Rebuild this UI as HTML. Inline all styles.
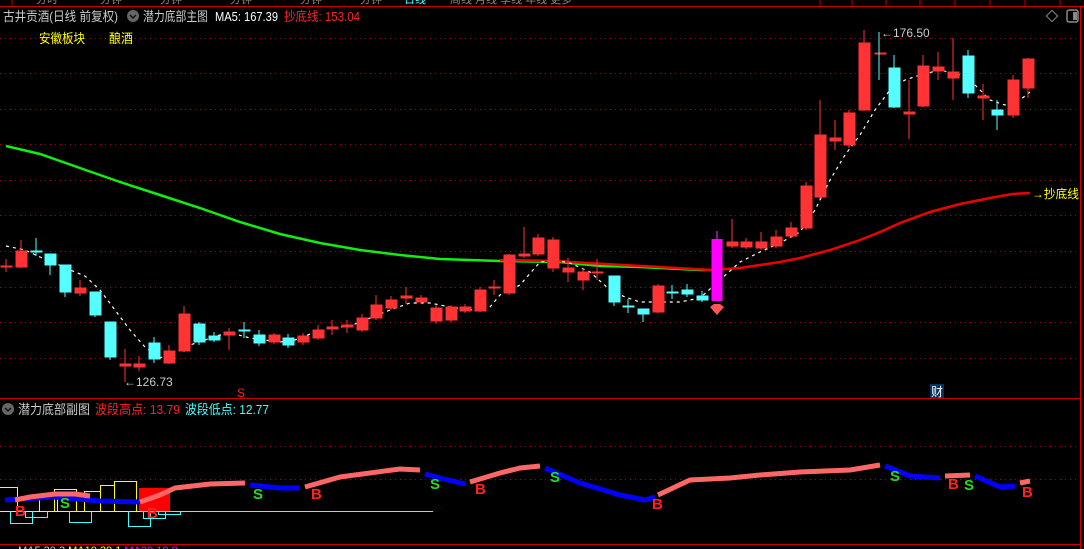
<!DOCTYPE html>
<html><head><meta charset="utf-8"><style>
html,body{margin:0;padding:0;background:#000;width:1084px;height:549px;overflow:hidden}
svg{display:block}
text{font-family:"Liberation Sans","Noto Sans CJK SC",sans-serif}
</style></head><body>
<svg width="1084" height="549" viewBox="0 0 1084 549" xmlns="http://www.w3.org/2000/svg">
<rect width="1084" height="549" fill="#000"/>
<g fill="#888" font-size="11">
<text x="36" y="3">分时</text><text x="100" y="3">分钟</text><text x="160" y="3">分钟</text><text x="230" y="3">分钟</text><text x="300" y="3">分钟</text><text x="360" y="3">分钟</text>
<text x="404" y="3" fill="#4ff">日线</text><text x="450" y="3">周线 月线 季线 年线 更多</text>
</g>
<g stroke="#c00" stroke-width="1">
<line x1="0" y1="6.5" x2="1084" y2="6.5"/>
<line x1="1080.5" y1="6" x2="1080.5" y2="549"/>
<line x1="12" y1="0" x2="12" y2="6"/>
<line x1="820" y1="0" x2="820" y2="6"/><line x1="852" y1="0" x2="852" y2="6"/><line x1="886" y1="0" x2="886" y2="6"/><line x1="920" y1="0" x2="920" y2="6"/><line x1="955" y1="0" x2="955" y2="6"/><line x1="990" y1="0" x2="990" y2="6"/><line x1="1025" y1="0" x2="1025" y2="6"/><line x1="1060" y1="0" x2="1060" y2="6"/>
<line x1="0" y1="398.5" x2="1080" y2="398.5"/>
<line x1="0" y1="544.5" x2="1080" y2="544.5"/>
</g>
<g stroke="#a00" stroke-width="1" stroke-dasharray="1,4">
<line x1="0" y1="38.5" x2="1080" y2="38.5"/><line x1="0" y1="73.5" x2="1080" y2="73.5"/><line x1="0" y1="109.5" x2="1080" y2="109.5"/><line x1="0" y1="144.5" x2="1080" y2="144.5"/><line x1="0" y1="180.5" x2="1080" y2="180.5"/><line x1="0" y1="215.5" x2="1080" y2="215.5"/><line x1="0" y1="251.5" x2="1080" y2="251.5"/><line x1="0" y1="287.5" x2="1080" y2="287.5"/><line x1="0" y1="322.5" x2="1080" y2="322.5"/><line x1="0" y1="358.5" x2="1080" y2="358.5"/>
<line x1="0" y1="446.5" x2="1080" y2="446.5"/><line x1="0" y1="479.5" x2="1080" y2="479.5"/>
</g>
<text x="3" y="21" font-size="13" fill="#ccc" textLength="115" lengthAdjust="spacingAndGlyphs">古井贡酒(日线 前复权)</text>
<circle cx="133" cy="16" r="6" fill="#666"/><path d="M130 15l3 3 3-3" stroke="#111" stroke-width="1.5" fill="none"/>
<text x="143" y="21" font-size="13" fill="#ccc" textLength="65" lengthAdjust="spacingAndGlyphs">潜力底部主图</text>
<text x="215" y="21" font-size="13" fill="#fff" textLength="63" lengthAdjust="spacingAndGlyphs">MA5: 167.39</text>
<text x="284" y="21" font-size="13" fill="#f22" textLength="76" lengthAdjust="spacingAndGlyphs">抄底线: 153.04</text>
<text x="39" y="43" font-size="13" fill="#ff0" textLength="46" lengthAdjust="spacingAndGlyphs">安徽板块</text>
<text x="109" y="43" font-size="13" fill="#ff0" textLength="24" lengthAdjust="spacingAndGlyphs">酿酒</text>
<rect x="1048" y="12" width="8" height="8" transform="rotate(45 1052 16)" fill="none" stroke="#888"/>
<rect x="1067" y="10" width="11" height="12" rx="2" fill="none" stroke="#888" stroke-width="1.5"/><rect x="1073" y="12" width="4" height="8" fill="#888"/>
<polyline fill="none" stroke="#1e1" stroke-width="2.5" points="6,146 40,154 80,168 120,182 160,195 200,208 240,222 280,234 320,243 360,250 400,255 440,259 500,261 560,262 600,266 640,267 700,270 712,270"/>
<polyline fill="none" stroke="#e00" stroke-width="2.5" points="500,260 560,261 570,262 712,270 740,268 780,262 800,258 830,250 860,240 880,232 900,223 930,212 960,204 990,198 1012,194 1030,193"/>
<text x="1032" y="198" font-size="12" fill="#ff0" textLength="47" lengthAdjust="spacingAndGlyphs">→抄底线</text>
<polyline fill="none" stroke="#fff" stroke-width="1.2" stroke-dasharray="3,4" points="6,246 25,250 40,257 55,263 70,270 85,276 100,290 115,310 130,330 145,347 160,358 175,352 190,345 205,340 220,335 235,334 250,338 265,340 280,342 295,340 310,334 330,328 350,326 370,318 390,310 410,303 430,303 450,307 470,310 490,307 500,295 520,285 540,262 555,260 570,263 590,272 610,290 625,297 640,302 660,302 680,302 700,298 720,280 740,262 760,252 780,243 800,232 815,210 830,180 845,155 860,135 875,110 890,90 905,80 920,75 940,70 960,75 975,85 990,100 1005,105 1020,100 1030,92"/>
<g stroke="#f33" fill="#f33" stroke-width="1">
<line x1="6" y1="259" x2="6" y2="272"/><rect x="1" y="266" width="11" height="1"/>
<line x1="21" y1="240" x2="21" y2="268"/><rect x="16" y="251" width="11" height="16"/>
<line x1="80" y1="280" x2="80" y2="296"/><rect x="75" y="288" width="11" height="5"/>
<line x1="125" y1="349" x2="125" y2="382"/><rect x="120" y="364" width="11" height="2"/>
<line x1="139" y1="356" x2="139" y2="371"/><rect x="134" y="364" width="11" height="3"/>
<line x1="169" y1="345" x2="169" y2="364"/><rect x="164" y="351" width="11" height="12"/>
<line x1="184" y1="306" x2="184" y2="352"/><rect x="179" y="314" width="11" height="37"/>
<line x1="229" y1="328" x2="229" y2="350"/><rect x="224" y="332" width="11" height="3"/>
<line x1="274" y1="333" x2="274" y2="344"/><rect x="269" y="335" width="11" height="7"/>
<line x1="303" y1="333" x2="303" y2="345"/><rect x="298" y="336" width="11" height="6"/>
<line x1="318" y1="325" x2="318" y2="340"/><rect x="313" y="330" width="11" height="8"/>
<line x1="332" y1="320" x2="332" y2="335"/><rect x="327" y="327" width="11" height="2"/>
<line x1="347" y1="320" x2="347" y2="333"/><rect x="342" y="325" width="11" height="2"/>
<line x1="362" y1="314" x2="362" y2="332"/><rect x="357" y="318" width="11" height="12"/>
<line x1="376" y1="295" x2="376" y2="320"/><rect x="371" y="305" width="11" height="13"/>
<line x1="391" y1="296" x2="391" y2="310"/><rect x="386" y="300" width="11" height="8"/>
<line x1="406" y1="287" x2="406" y2="304"/><rect x="401" y="296" width="11" height="2"/>
<line x1="421" y1="295" x2="421" y2="304"/><rect x="416" y="298" width="11" height="4"/>
<line x1="436" y1="305" x2="436" y2="324"/><rect x="431" y="308" width="11" height="13"/>
<line x1="451" y1="305" x2="451" y2="322"/><rect x="446" y="307" width="11" height="13"/>
<line x1="465" y1="304" x2="465" y2="313"/><rect x="460" y="307" width="11" height="4"/>
<line x1="480" y1="287" x2="480" y2="312"/><rect x="475" y="290" width="11" height="21"/>
<line x1="494" y1="280" x2="494" y2="295"/><rect x="489" y="287" width="11" height="1"/>
<line x1="509" y1="254" x2="509" y2="295"/><rect x="504" y="255" width="11" height="38"/>
<line x1="524" y1="227" x2="524" y2="258"/><rect x="519" y="254" width="11" height="2"/>
<line x1="538" y1="234" x2="538" y2="256"/><rect x="533" y="238" width="11" height="16"/>
<line x1="553" y1="237" x2="553" y2="272"/><rect x="548" y="240" width="11" height="28"/>
<line x1="568" y1="258" x2="568" y2="282"/><rect x="563" y="268" width="11" height="4"/>
<line x1="583" y1="268" x2="583" y2="290"/><rect x="578" y="272" width="11" height="8"/>
<line x1="597" y1="259" x2="597" y2="280"/><rect x="592" y="272" width="11" height="1"/>
<line x1="658" y1="284" x2="658" y2="313"/><rect x="653" y="286" width="11" height="26"/>
<line x1="732" y1="219" x2="732" y2="248"/><rect x="727" y="242" width="11" height="4"/>
<line x1="746" y1="238" x2="746" y2="249"/><rect x="741" y="242" width="11" height="5"/>
<line x1="761" y1="232" x2="761" y2="250"/><rect x="756" y="242" width="11" height="6"/>
<line x1="776" y1="230" x2="776" y2="248"/><rect x="771" y="237" width="11" height="9"/>
<line x1="791" y1="222" x2="791" y2="238"/><rect x="786" y="228" width="11" height="8"/>
<line x1="806" y1="182" x2="806" y2="230"/><rect x="801" y="186" width="11" height="42"/>
<line x1="820" y1="100" x2="820" y2="199"/><rect x="815" y="135" width="11" height="62"/>
<line x1="835" y1="120" x2="835" y2="150"/><rect x="830" y="138" width="11" height="3"/>
<line x1="849" y1="110" x2="849" y2="148"/><rect x="844" y="113" width="11" height="32"/>
<line x1="864" y1="30" x2="864" y2="111"/><rect x="859" y="43" width="11" height="67"/>
<rect x="875" y="53" width="11" height="1"/>
<line x1="909" y1="80" x2="909" y2="139"/><rect x="904" y="112" width="11" height="2"/>
<line x1="923" y1="55" x2="923" y2="107"/><rect x="918" y="66" width="11" height="40"/>
<line x1="938" y1="52" x2="938" y2="80"/><rect x="933" y="67" width="11" height="4"/>
<line x1="953" y1="38" x2="953" y2="100"/><rect x="948" y="72" width="11" height="6"/>
<line x1="983" y1="84" x2="983" y2="120"/><rect x="978" y="96" width="11" height="2"/>
<line x1="1013" y1="75" x2="1013" y2="118"/><rect x="1008" y="80" width="11" height="35"/>
<line x1="1028" y1="58" x2="1028" y2="98"/><rect x="1023" y="59" width="11" height="29"/>
</g>
<g stroke="#5ff" fill="#5ff" stroke-width="1">
<line x1="36" y1="238" x2="36" y2="256"/><rect x="31" y="251" width="11" height="1"/>
<line x1="50" y1="254" x2="50" y2="275"/><rect x="45" y="254" width="11" height="11"/>
<line x1="65" y1="265" x2="65" y2="297"/><rect x="60" y="265" width="11" height="27"/>
<line x1="95" y1="292" x2="95" y2="317"/><rect x="90" y="292" width="11" height="23"/>
<line x1="110" y1="322" x2="110" y2="360"/><rect x="105" y="322" width="11" height="35"/>
<line x1="154" y1="337" x2="154" y2="363"/><rect x="149" y="343" width="11" height="16"/>
<line x1="199" y1="322" x2="199" y2="345"/><rect x="194" y="324" width="11" height="18"/>
<line x1="214" y1="332" x2="214" y2="342"/><rect x="209" y="336" width="11" height="4"/>
<line x1="244" y1="322" x2="244" y2="338"/><rect x="239" y="330" width="11" height="1"/>
<line x1="259" y1="330" x2="259" y2="346"/><rect x="254" y="335" width="11" height="8"/>
<line x1="288" y1="334" x2="288" y2="348"/><rect x="283" y="338" width="11" height="7"/>
<line x1="614" y1="276" x2="614" y2="306"/><rect x="609" y="276" width="11" height="26"/>
<line x1="628" y1="299" x2="628" y2="313"/><rect x="623" y="306" width="11" height="1"/>
<line x1="643" y1="309" x2="643" y2="322"/><rect x="638" y="309" width="11" height="5"/>
<line x1="672" y1="285" x2="672" y2="299"/><rect x="667" y="292" width="11" height="1"/>
<line x1="687" y1="284" x2="687" y2="297"/><rect x="682" y="290" width="11" height="4"/>
<line x1="702" y1="291" x2="702" y2="302"/><rect x="697" y="296" width="11" height="4"/>
<line x1="879" y1="32" x2="879" y2="80"/>
<line x1="894" y1="55" x2="894" y2="108"/><rect x="889" y="68" width="11" height="39"/>
<line x1="968" y1="50" x2="968" y2="98"/><rect x="963" y="56" width="11" height="37"/>
<line x1="997" y1="100" x2="997" y2="130"/><rect x="992" y="110" width="11" height="5"/>
</g>
<line x1="717" y1="231" x2="717" y2="240" stroke="#f3f"/><rect x="711.5" y="239" width="11" height="62" fill="#f0f"/>
<path d="M710 307l4-3h6l4 3-7 8z" fill="#f55"/>
<text x="881" y="37" font-size="12" fill="#ccc">←176.50</text>
<text x="124" y="386" font-size="12" fill="#ccc">←126.73</text>
<text x="237" y="397" font-size="12" fill="#f22">S</text>
<rect x="930" y="384" width="14" height="14" fill="#036"/><text x="931" y="396" font-size="12" fill="#fff">财</text>
<circle cx="8" cy="409" r="6" fill="#666"/><path d="M5 408l3 3 3-3" stroke="#111" stroke-width="1.5" fill="none"/>
<text x="18" y="414" font-size="13" fill="#ccc" textLength="72" lengthAdjust="spacingAndGlyphs">潜力底部副图</text>
<text x="95" y="414" font-size="13" fill="#f22" textLength="85" lengthAdjust="spacingAndGlyphs">波段高点: 13.79</text>
<text x="185" y="414" font-size="13" fill="#4ff" textLength="84" lengthAdjust="spacingAndGlyphs">波段低点: 12.77</text>
<g fill="none" stroke="#ff0" stroke-width="1">
<path d="M0 487.5H17.5V511.5M39.5 511.5V494.5H57.5V511.5M54.5 511.5V489.5H76.5V511.5M84.5 511.5V491.5H100.5V511.5M100.5 511.5V485.5H114.5V511.5M114.5 511.5V481.5H136.5V511.5M0 511.5H140"/>
</g>
<g fill="none" stroke="#4ff" stroke-width="1">
<path d="M10.5 511V523.5H32.5V511M25.5 511V517.5H47.5V511M69.5 511V522.5H91.5V511M128.5 511V526.5H150.5V511M143.5 511V518.5H165.5V511M158.5 511V514.5H180.5V511M140 511.5H433"/>
</g>
<rect x="139" y="488" width="31" height="23" fill="#f00"/>
<g fill="none" stroke-width="5" stroke-linejoin="round">
<polyline stroke="#00f" points="5,500 20,499 55,497 100,501 140,502"/>
<polyline stroke="#f66" points="15,500 30,497 55,494 75,494 90,496"/>
<polyline stroke="#f66" points="140,502 160,495 175,488 210,484 245,483"/>
<polyline stroke="#00f" points="250,485 280,488 300,488"/>
<polyline stroke="#f66" points="305,487 340,477 400,469 420,470"/>
<polyline stroke="#00f" points="425,474 440,478 465,484"/>
<polyline stroke="#f66" points="470,482 500,473 520,468 540,466"/>
<polyline stroke="#00f" points="545,468 580,483 620,495 645,500 655,497"/>
<polyline stroke="#f66" points="658,495 690,480 730,478 760,475 800,472 850,470 880,465"/>
<polyline stroke="#00f" points="885,466 910,476 940,478"/>
<polyline stroke="#f66" points="945,476 970,475"/>
<polyline stroke="#00f" points="975,476 1000,487 1015,486"/>
<polyline stroke="#f66" points="1020,483 1030,481"/>
</g>
<g font-size="15" font-weight="bold">
<text x="15" y="516" fill="#f22">B</text><text x="60" y="508" fill="#2d2">S</text><text x="147" y="518" fill="#f22">B</text>
<text x="253" y="499" fill="#2d2">S</text><text x="311" y="499" fill="#f22">B</text><text x="430" y="489" fill="#2d2">S</text>
<text x="475" y="494" fill="#f22">B</text><text x="550" y="482" fill="#2d2">S</text><text x="652" y="509" fill="#f22">B</text>
<text x="890" y="481" fill="#2d2">S</text><text x="948" y="489" fill="#f22">B</text><text x="964" y="490" fill="#2d2">S</text><text x="1022" y="497" fill="#f22">B</text>
</g>
<text x="18" y="554" font-size="11" fill="#ccc">MA5 20.3 <tspan fill="#ff0">MA10 20.1</tspan> <tspan fill="#f0f">MA20 19.8</tspan></text>
</svg>
</body></html>
